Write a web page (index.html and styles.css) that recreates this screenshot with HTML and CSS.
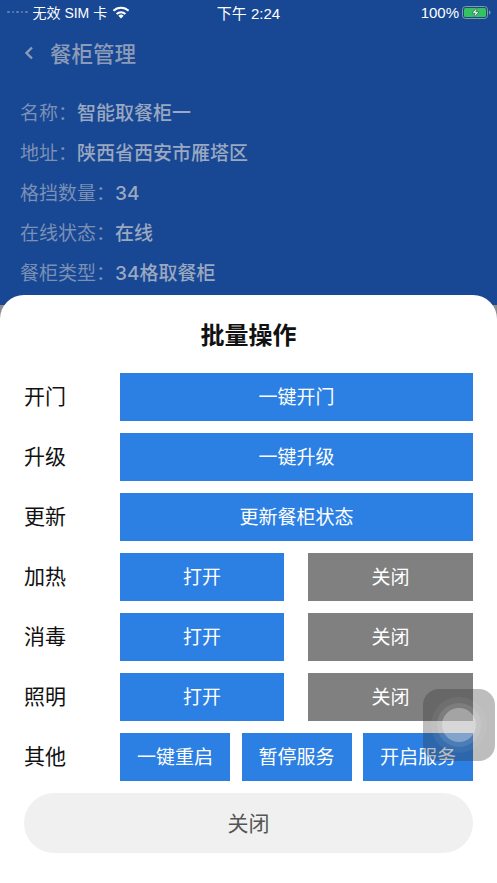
FILE: index.html
```html
<!DOCTYPE html>
<html lang="zh">
<head>
<meta charset="utf-8">
<title>餐柜管理</title>
<link rel="stylesheet" href="styles.css">
</head>
<body>
<div class="screen">
  <div class="status">
    <div class="status-left">
      <span class="dots"><i></i><i></i><i></i><i></i><i></i></span>
      <span class="carrier">无效 SIM 卡</span>
      <svg class="wifi" viewBox="0 0 18 13" width="18" height="13"><path d="M9 12.600 6.400 9.800a3.700 3.700 0 0 1 5.200 0Z" fill="#fff"/><path d="M4.600 8A6.300 6.300 0 0 1 13.400 8" fill="none" stroke="#fff" stroke-width="2"/><path d="M1.400 4.800A10.800 10.800 0 0 1 16.600 4.800" fill="none" stroke="#fff" stroke-width="2"/></svg>
    </div>
    <div class="status-time">下午 2:24</div>
    <div class="status-right">
      <span>100%</span>
      <svg class="battery" viewBox="0 0 29 13" width="29" height="13"><rect x=".5" y=".5" width="25" height="12" rx="3" fill="none" stroke="#7fa08f"/><rect x="2" y="2" width="22" height="9" rx="1.500" fill="#35c262"/><path d="M27 4.500c1 .3 1.500 1 1.500 2s-.5 1.700-1.500 2Z" fill="#7fa08f"/><path d="M15.500 1 10 7.200h3.200L11.500 12l5.500-6.200h-3.200Z" fill="#fff" stroke="#1d4a5e" stroke-width=".6"/></svg>
    </div>
  </div>
  <div class="nav">
    <svg class="back" viewBox="0 0 10 14" width="10" height="14"><path d="M8 1.500 2.500 7 8 12.500" fill="none" stroke="#8c9cb8" stroke-width="2.400"/></svg>
    <span class="nav-title">餐柜管理</span>
  </div>
  <div class="info">
    <div class="info-row"><span class="k">名称：</span><span class="v">智能取餐柜一</span></div>
    <div class="info-row"><span class="k">地址：</span><span class="v">陕西省西安市雁塔区</span></div>
    <div class="info-row"><span class="k">格挡数量：</span><span class="v">34</span></div>
    <div class="info-row"><span class="k">在线状态：</span><span class="v">在线</span></div>
    <div class="info-row"><span class="k">餐柜类型：</span><span class="v">34格取餐柜</span></div>
  </div>
  <div class="backdrop"></div>
  <div class="sheet">
    <div class="sheet-title">批量操作</div>
    <div class="rows">
      <div class="row"><div class="label">开门</div><div class="btn blue">一键开门</div></div>
      <div class="row"><div class="label">升级</div><div class="btn blue">一键升级</div></div>
      <div class="row"><div class="label">更新</div><div class="btn blue">更新餐柜状态</div></div>
      <div class="row"><div class="label">加热</div><div class="pair"><div class="btn blue">打开</div><div class="btn gray">关闭</div></div></div>
      <div class="row"><div class="label">消毒</div><div class="pair"><div class="btn blue">打开</div><div class="btn gray">关闭</div></div></div>
      <div class="row"><div class="label">照明</div><div class="pair"><div class="btn blue">打开</div><div class="btn gray">关闭</div></div></div>
      <div class="row"><div class="label">其他</div><div class="triple"><div class="btn blue">一键重启</div><div class="btn blue">暂停服务</div><div class="btn blue">开启服务</div></div></div>
    </div>
    <div class="close">关闭</div>
  </div>
  <div class="assistive"><div class="ring r1"><div class="ring r2"><div class="ring r3"></div></div></div></div>
</div>
</body>
</html>
```
FILE: styles.css
```css
* { box-sizing: border-box; }
html, body { margin: 0; padding: 0; }
body { font-family: "Liberation Sans", "Noto Sans CJK SC", sans-serif; }
.screen { position: relative; width: 497px; height: 883px; background: #184794; overflow: hidden; }
.status { height: 24px; display: flex; align-items: center; justify-content: space-between; padding: 0 6px 0 7px; color: #fff; font-size: 15px; position: relative; }
.status-left { display: flex; align-items: center; gap: 5px; }
.carrier { font-size: 14px; margin-left: 2px; }
.dots { display: flex; gap: 2px; margin-right: -2px; }
.dots i { width: 2.500px; height: 2.500px; border-radius: 50%; background: #5f7fb5; }
.status-time { position: absolute; left: 0; right: 0; text-align: center; }
.status-right { display: flex; align-items: center; gap: 3px; }
.nav { height: 58px; display: flex; align-items: center; padding: 0 0 0 24px; gap: 16px; }
.nav-title { font-size: 21.500px; font-weight: 500; font-family: "Noto Sans CJK SC", sans-serif; color: #8c9cb8; line-height: 30px; }
.info { padding-top: 13px; }
.info-row { height: 40px; line-height: 38px; padding-left: 20px; font-size: 19px; white-space: nowrap; }
.k { color: #7a90b5; }
.v { color: #9aa8c0; font-weight: 500; font-family: "Inter", "Noto Sans CJK SC", sans-serif; }
.backdrop { position: absolute; left: 0; right: 0; top: 305px; bottom: 0; background: #8c8c8c; }
.sheet { position: absolute; left: 0; right: 0; top: 295px; bottom: 0; background: #fff; border-radius: 24px 24px 0 0; padding: 0 24px; display: flex; flex-direction: column; }
.sheet-title { height: 78px; padding-top: 23px; text-align: center; font-size: 24px; font-weight: 700; color: #111; line-height: 36px; }
.rows { display: flex; flex-direction: column; gap: 12px; }
.row { display: flex; height: 48px; align-items: stretch; }
.label { width: 96px; font-size: 21px; line-height: 47px; color: #111; }
.btn { display: flex; align-items: center; justify-content: center; color: #fff; font-size: 19px; height: 48px; padding-bottom: 3px; }
.row > .btn { flex: 1; }
.blue { background: #2c7fe3; }
.gray { background: #808080; }
.pair { flex: 1; display: grid; grid-template-columns: 164px 165px; justify-content: space-between; }
.triple { flex: 1; display: grid; grid-template-columns: repeat(3, 110px); justify-content: space-between; }
.close { margin-top: 12px; height: 60px; border-radius: 30px; background: #f0f0f0; color: #555; font-size: 21px; display: flex; align-items: center; justify-content: center; padding-bottom: 3px; }
.assistive { position: absolute; left: 423px; top: 689px; width: 72px; height: 72px; border-radius: 16px; background: rgba(50,50,50,.32); display: flex; align-items: center; justify-content: center; }
.ring { border-radius: 50%; display: flex; align-items: center; justify-content: center; }
.r1 { width: 56px; height: 56px; background: rgba(255,255,255,.06); }
.r2 { width: 44px; height: 44px; background: rgba(255,255,255,.1); }
.r3 { width: 34px; height: 34px; background: rgba(255,255,255,.3); }
```
